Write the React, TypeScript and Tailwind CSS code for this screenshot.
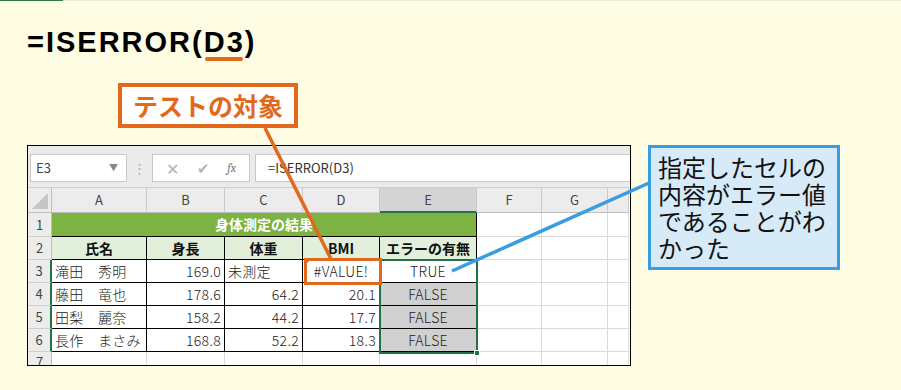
import React from "react";

const JP = { fontFamily: '"Noto Sans CJK JP", "Noto Sans", sans-serif' };

// column widths for A..H (H is cut off by the frame)
const colW = ["w-[95px]", "w-[78px]", "w-[78px]", "w-[77px]", "w-[97px]", "w-[65px]", "w-[66px]", "w-[21px]"];
const letters = ["A", "B", "C", "D", "E", "F", "G", ""];

type Cell = { t?: string; align?: "l" | "r" | "c"; gray?: boolean };

const body: Cell[][] = [
  [{ t: "滝田　秀明" }, { t: "169.0", align: "r" }, { t: "未測定" }, { t: "#VALUE!", align: "c" }, { t: "TRUE", align: "c" }],
  [{ t: "藤田　竜也" }, { t: "178.6", align: "r" }, { t: "64.2", align: "r" }, { t: "20.1", align: "r" }, { t: "FALSE", align: "c", gray: true }],
  [{ t: "田梨　麗奈" }, { t: "158.2", align: "r" }, { t: "44.2", align: "r" }, { t: "17.7", align: "r" }, { t: "FALSE", align: "c", gray: true }],
  [{ t: "長作　まさみ" }, { t: "168.8", align: "r" }, { t: "52.2", align: "r" }, { t: "18.3", align: "r" }, { t: "FALSE", align: "c", gray: true }],
];

function RowHead({ n, h, green }: { n: string; h: string; green?: boolean }) {
  return (
    <div
      className={`w-[24px] ${h} shrink-0 flex items-center justify-center bg-[#ececec] border-b border-[#cfcfcf] border-r ${
        green ? "border-r-[#217346] border-r-2" : "border-r-[#bdbdbd]"
      } text-[13px] text-[#444]`}
    >
      {n}
    </div>
  );
}

function EmptyCells({ from, h }: { from: number; h: string }) {
  return (
    <>
      {colW.slice(from).map((w, i) => (
        <div key={i} className={`${w} ${h} shrink-0 border-r border-b border-[#dadada] bg-white`} />
      ))}
    </>
  );
}

function Sheet() {
  return (
    <div className="relative w-[604px] shrink-0 border border-black bg-white text-[#222]" style={JP}>
      {/* name box + formula bar */}
      <div className="h-[42px] bg-[#ebebeb] flex items-start pt-[8px] pl-[2px] border-b border-[#d0d0d0]">
        <div className="w-[97px] h-[28px] bg-white border border-[#c8c8c8] flex items-center justify-between pl-[5px] pr-[8px] text-[13px] text-[#444]">
          <span>E3</span>
          <span className="text-[9px] text-[#888]">▼</span>
        </div>
        <div className="w-[25px] h-[28px] flex items-center justify-center text-[#b0b0b0] text-[13px]">⋮</div>
        <div className="w-[98px] h-[28px] bg-white border border-[#c8c8c8] flex items-center justify-around px-[4px] text-[#b4b4b4]">
          <span className="text-[16px]">✕</span>
          <span className="text-[15px]">✔</span>
          <span className="text-[12px] italic font-serif text-[#777]">fx</span>
        </div>
        <div className="ml-[5px] flex-1 h-[28px] bg-white border border-[#c8c8c8] border-r-0 flex items-center pl-[12px] text-[13px] text-[#333]">
          =ISERROR(D3)
        </div>
      </div>

      {/* column headers */}
      <div className="flex h-[25px]">
        <div className="relative w-[24px] shrink-0 bg-[#ececec] border-r border-b border-[#bdbdbd]">
          <div className="absolute right-[3px] bottom-[3px] w-0 h-0 border-l-[16px] border-l-transparent border-b-[16px] border-b-[#c6c6c6]" />
        </div>
        {colW.map((w, i) => (
          <div
            key={i}
            className={`${w} shrink-0 flex items-center justify-center text-[13px] text-[#444] border-r border-[#cbcbcb] ${
              i === 4 ? "bg-[#d4d4d4] border-b-2 border-b-[#217346]" : "bg-[#ececec] border-b border-b-[#bdbdbd]"
            }`}
          >
            {letters[i]}
          </div>
        ))}
      </div>

      {/* row 1 : merged title */}
      <div className="flex">
        <RowHead n="1" h="h-[24px]" />
        <div className="w-[425px] h-[24px] shrink-0 bg-[#7cb342] border-b border-r border-black flex items-center justify-center text-white font-bold text-[14px]">
          身体測定の結果
        </div>
        <EmptyCells from={5} h="h-[24px]" />
      </div>

      {/* row 2 : headers */}
      <div className="flex">
        <RowHead n="2" h="h-[23px]" />
        {["氏名", "身長", "体重", "BMI", "エラーの有無"].map((t, i) => (
          <div
            key={t}
            className={`${colW[i]} h-[23px] shrink-0 bg-[#e2efda] border-b border-r border-black flex items-center justify-center font-bold text-[14px] text-[#111]`}
          >
            {t}
          </div>
        ))}
        <EmptyCells from={5} h="h-[23px]" />
      </div>

      {/* rows 3-6 */}
      {body.map((row, r) => (
        <div key={r} className="flex">
          <RowHead n={String(r + 3)} h="h-[23px]" green />
          {row.map((c, i) => (
            <div
              key={i}
              className={`relative ${colW[i]} h-[23px] shrink-0 border-b border-r border-black flex items-center px-[3px] text-[14px] font-light tracking-[0.3px] ${
                c.gray ? "bg-[#d0d0d0]" : "bg-white"
              } ${c.align === "r" ? "justify-end" : c.align === "c" ? "justify-center" : "justify-start"} text-[#222]`}
            >
              {r === 0 && i === 3 && (
                <span className="absolute left-[1px] top-[1px] w-0 h-0 border-t-[5px] border-t-[#2f9a4c] border-r-[5px] border-r-transparent" />
              )}
              {c.t}
            </div>
          ))}
          <EmptyCells from={5} h="h-[23px]" />
        </div>
      ))}

      {/* row 7 (cut) */}
      <div className="flex h-[13px] overflow-hidden">
        <div className="w-[24px] h-[23px] shrink-0 bg-[#ececec] border-r border-[#bdbdbd] flex justify-center text-[13px] text-[#444] leading-[20px]">
          7
        </div>
        {colW.map((w, i) => (
          <div key={i} className={`${w} h-[23px] shrink-0 border-r border-[#dadada] bg-white`} />
        ))}
      </div>

      {/* selection E3:E6 */}
      <div className="absolute left-[351px] top-[113px] w-[99px] h-[95px] border-2 border-[#217346]">
        <div className="absolute -right-[4px] -bottom-[4px] w-[6px] h-[6px] bg-[#217346] border border-white" />
      </div>
      {/* D3 highlight */}
      <div className="absolute left-[276px] top-[112px] w-[78px] h-[27px] border-[3px] border-[#e2691c]" />
    </div>
  );
}

export default function App() {
  return (
    <div className="relative w-[901px] h-[390px] overflow-hidden bg-[#fefce3]">
      <div className="flex h-px">
        <div className="w-[63px] bg-[#2f7d3f]" />
        <div className="flex-1 bg-[#e5efdb]" />
      </div>

      <div
        className="pl-[27px] mt-[21px] h-[40px] leading-[40px] text-[29px] font-bold tracking-[2px] text-black"
        style={{ fontFamily: '"Liberation Sans", Arial, sans-serif' }}
      >
        =ISERROR(
        <span className="relative inline-block">
          D3
          <span className="absolute left-[1px] right-[2px] top-[35px] h-[4px] rounded-full bg-[#e2691c]" />
        </span>
        )
      </div>

      <div className="ml-[118px] mt-[21px] w-[180px] h-[45px] border-4 border-[#e2691c] bg-white flex items-center justify-center">
        <span className="text-[25px] font-bold text-[#e2691c] leading-none" style={JP}>
          テストの対象
        </span>
      </div>

      <div className="flex items-start mt-[17px] ml-[27px] gap-[17px]">
        <Sheet />
        <div
          className="w-[192px] h-[125px] border-[3px] border-[#3a9de2] bg-[#d6eaf8] pl-[7px] pt-[5px] text-[24px] leading-[27px] text-[#111]"
          style={JP}
        >
          指定したセルの
          <br />
          内容がエラー値
          <br />
          であることがわ
          <br />
          かった
        </div>
      </div>

      <svg className="absolute inset-0 pointer-events-none" width="901" height="390">
        <line x1="265" y1="128" x2="331" y2="259" stroke="#e2691c" strokeWidth="3.5" />
        <line x1="452" y1="271" x2="649" y2="183" stroke="#3a9de2" strokeWidth="3.5" />
      </svg>
    </div>
  );
}
